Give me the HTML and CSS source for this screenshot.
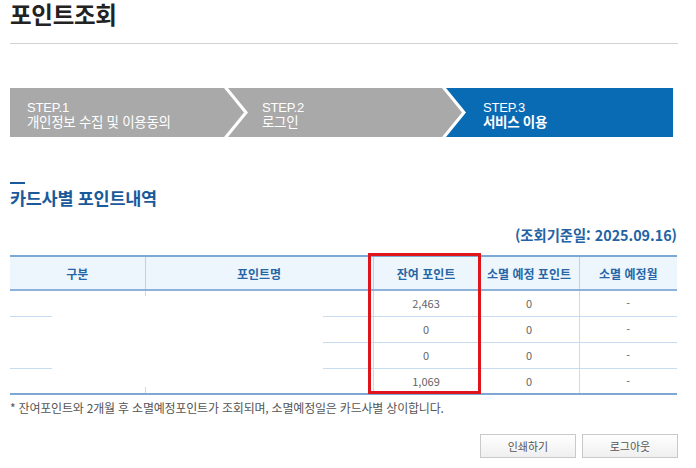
FILE: index.html
```html
<!DOCTYPE html>
<html lang="ko">
<head>
<meta charset="utf-8">
<title>포인트조회</title>
<link rel="stylesheet" href="styles.css">
</head>
<body>
<div class="page">
  <h1 class="title">포인트조회</h1>

  <div class="steps">
    <div class="step s1"><span class="step-no">STEP.1</span><span class="step-name">개인정보 수집 및 이용동의</span></div>
    <div class="step s2"><span class="step-no">STEP.2</span><span class="step-name">로그인</span></div>
    <div class="step s3 active"><span class="step-no">STEP.3</span><span class="step-name">서비스 이용</span></div>
  </div>

  <div class="section-head">
    <span class="section-bar"></span>
    <h2 class="section-title">카드사별 포인트내역</h2>
  </div>

  <div class="date">(조회기준일: 2025.09.16)</div>

  <div class="table-wrap">
    <table class="points">
      <colgroup>
        <col class="c1"><col class="c2"><col class="c3"><col class="c4"><col class="c5">
      </colgroup>
      <thead>
        <tr><th>구분</th><th>포인트명</th><th>잔여 포인트</th><th>소멸 예정 포인트</th><th>소멸 예정월</th></tr>
      </thead>
      <tbody>
        <tr><td></td><td></td><td>2,463</td><td>0</td><td>-</td></tr>
        <tr><td></td><td></td><td>0</td><td>0</td><td>-</td></tr>
        <tr><td></td><td></td><td>0</td><td>0</td><td>-</td></tr>
        <tr><td></td><td></td><td>1,069</td><td>0</td><td>-</td></tr>
      </tbody>
    </table>
    <div class="redact redact-a"></div>
    <div class="redact redact-b"></div>
    <div class="highlight"></div>
  </div>

  <p class="note">* 잔여포인트와 2개월 후 소멸예정포인트가 조회되며, 소멸예정일은 카드사별 상이합니다.</p>

  <div class="buttons">
    <button class="btn">인쇄하기</button>
    <button class="btn">로그아웃</button>
  </div>
</div>
</body>
</html>
```

FILE: styles.css
```css
* { box-sizing: border-box; }

html, body {
  margin: 0;
  padding: 0;
  background: #fff;
}

body {
  font-family: "Noto Sans CJK KR", "Noto Sans", sans-serif;
  color: #333;
}

.page {
  width: 696px;
  padding: 0 18px 0 10px;
}

.title {
  margin: 0;
  padding: 1px 0 11px;
  font-family: "Liberation Sans", "Noto Sans CJK KR", sans-serif;
  font-size: 23.5px;
  line-height: 31px;
  font-weight: 700;
  color: #222;
  letter-spacing: -0.3px;
  border-bottom: 1px solid #d2d2d2;
}

/* steps */
.steps {
  display: flex;
  width: 663px;
  height: 49px;
  margin-top: 44px;
}

.step {
  display: flex;
  flex-direction: column;
  height: 49px;
  padding-top: 13px;
  color: #fff;
  background: #a9a9a9;
}

.step-no {
  font-family: "Liberation Sans Narrow", "Liberation Sans", sans-serif;
  font-size: 13px;
  line-height: 14px;
  letter-spacing: -0.2px;
}

.step-name {
  font-family: "Liberation Sans", "Noto Sans CJK KR", sans-serif;
  font-size: 13.5px;
  line-height: 15.5px;
  letter-spacing: -0.3px;
}

.s1 {
  width: 234px;
  padding-left: 17px;
  clip-path: polygon(0 0, calc(100% - 20px) 0, 100% 50%, calc(100% - 20px) 100%, 0 100%);
}

.s2 {
  width: 234px;
  margin-left: -16px;
  padding-left: 34px;
  clip-path: polygon(0 0, calc(100% - 20px) 0, 100% 50%, calc(100% - 20px) 100%, 0 100%, 20px 50%);
}

.s3 {
  flex: 1;
  margin-left: -16px;
  padding-left: 37px;
  background: #0a6bb5;
  clip-path: polygon(0 0, 100% 0, 100% 100%, 0 100%, 20px 50%);
}

.s3 .step-name { font-weight: 700; }

/* section */
.section-head {
  margin-top: 45px;
}

.section-bar {
  display: block;
  width: 15px;
  height: 2px;
  background: #1b5a9a;
}

.section-title {
  margin: 2px 0 0;
  font-size: 17.5px;
  line-height: 24px;
  font-weight: 700;
  color: #1b5a9a;
  letter-spacing: -0.3px;
}

.date {
  margin-top: 15px;
  text-align: right;
  font-size: 14.3px;
  line-height: 20px;
  font-weight: 700;
  color: #2362a3;
  padding-right: 1px;
}

/* table */
.table-wrap {
  position: relative;
  margin-top: 10px;
  width: 667px;
}

.points {
  width: 667px;
  border-collapse: collapse;
  table-layout: fixed;
  border-top: 2px solid #7ea8d4;
  border-bottom: 2px solid #7ea8d4;
}

.c1 { width: 135px; }
.c2 { width: 228px; }
.c3 { width: 106px; }
.c4 { width: 100px; }
.c5 { width: 98px; }

.points th {
  height: 34px;
  background: #eef6fd;
  color: #2766a6;
  font-size: 12px;
  font-weight: 700;
  border-bottom: 2px solid #8db2da;
  border-left: 1px solid #b8d2ec;
  padding: 0;
}

.points td {
  height: 26px;
  text-align: center;
  font-size: 11px;
  color: #666;
  border-top: 1px solid #c9dcef;
  border-left: 1px solid #c9dcef;
  padding: 0;
}

.points th:first-child,
.points td:first-child { border-left: none; }

.redact {
  position: absolute;
  background: #fff;
}

.redact-a {
  left: 42px;
  top: 41px;
  width: 271px;
  height: 91px;
}

.redact-b {
  left: 0;
  top: 65px;
  width: 42px;
  height: 42px;
}

.highlight {
  position: absolute;
  left: 358px;
  top: -2px;
  width: 113px;
  height: 141px;
  border: 3px solid #e0141b;
}

.note {
  margin: 5px 0 0;
  font-size: 12px;
  line-height: 16px;
  color: #555;
  letter-spacing: -0.2px;
}

.buttons {
  display: flex;
  justify-content: flex-end;
  gap: 6px;
  margin-top: 18px;
}

.btn {
  width: 96px;
  height: 24px;
  border: 1px solid #c9c9c9;
  background: linear-gradient(#ffffff, #efefef);
  font-family: "Noto Sans CJK KR", sans-serif;
  font-size: 11px;
  color: #555;
  padding: 0;
}
```
